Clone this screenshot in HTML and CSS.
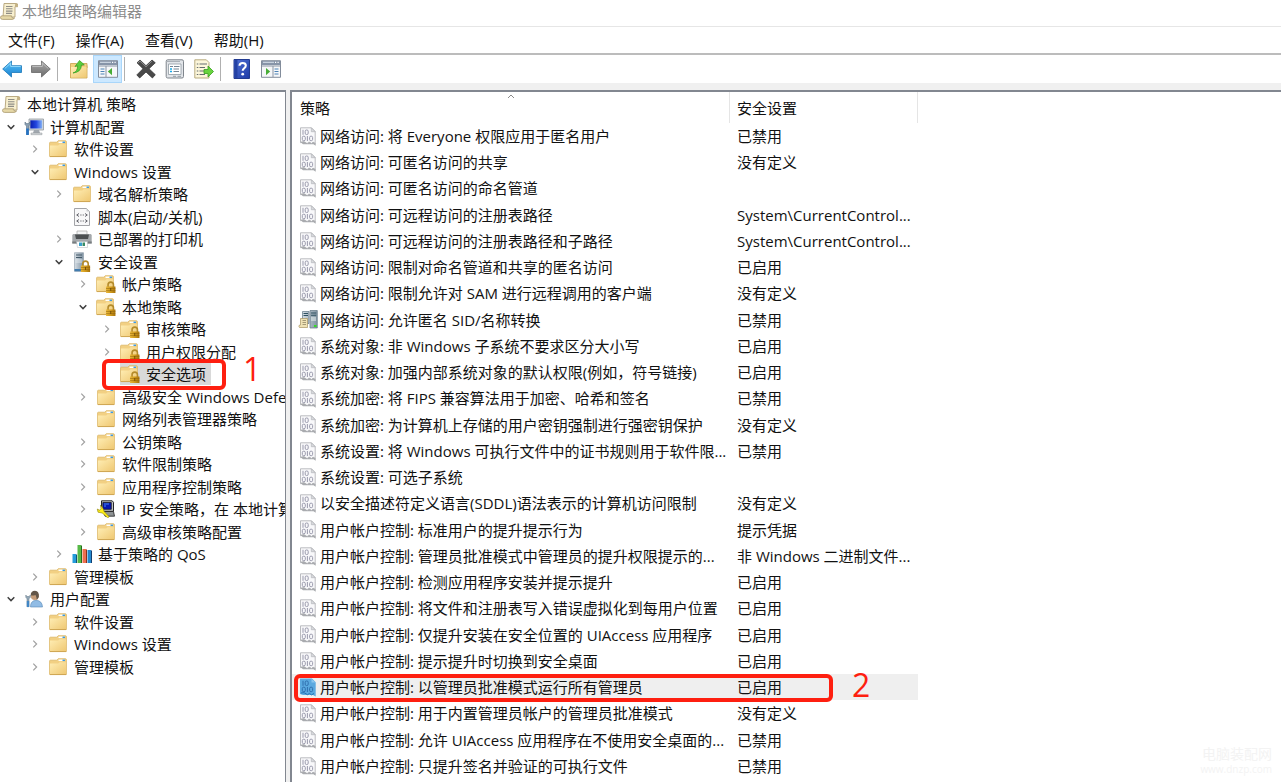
FILE: index.html
```html
<!DOCTYPE html>
<html lang="zh-CN">
<head>
<meta charset="utf-8">
<title>本地组策略编辑器</title>
<link rel="stylesheet" href="styles.css">
</head>
<body>
<svg class="sprite" aria-hidden="true">
  <defs>
    <linearGradient id="gFolder" x1="0" y1="0" x2="1" y2="1"><stop offset="0" stop-color="#ffeeb5"/><stop offset="1" stop-color="#efc873"/></linearGradient>
    <linearGradient id="gLock" x1="0" y1="0" x2="1" y2="0"><stop offset="0" stop-color="#e9b73a"/><stop offset=".5" stop-color="#d09a1c"/><stop offset="1" stop-color="#a8730c"/></linearGradient>
    <linearGradient id="gBlue" x1="0" y1="0" x2="0" y2="1"><stop offset="0" stop-color="#5cc4f8"/><stop offset="1" stop-color="#1780d0"/></linearGradient>
    <linearGradient id="gGray" x1="0" y1="0" x2="0" y2="1"><stop offset="0" stop-color="#a8a8a8"/><stop offset="1" stop-color="#6d6d6d"/></linearGradient>
    <linearGradient id="gScreen" x1="0" y1="0" x2="1" y2="0"><stop offset="0" stop-color="#0a1fae"/><stop offset=".5" stop-color="#2346e0"/><stop offset="1" stop-color="#86b4f6"/></linearGradient>
    <linearGradient id="gServer" x1="0" y1="0" x2="1" y2="0"><stop offset="0" stop-color="#d5dde3"/><stop offset="1" stop-color="#7f92a2"/></linearGradient>
    <linearGradient id="gHelp" x1="0" y1="0" x2="1" y2="1"><stop offset="0" stop-color="#5272d6"/><stop offset="1" stop-color="#1c3aa6"/></linearGradient>
    <symbol id="scroll" viewBox="0 0 18 18"><path d="M4 1.5h12.5q1.2 0 1.2 1.6v1.6H15V15H3z" fill="#f7efcf" stroke="#b3a278" stroke-width=".9"/><path d="M15 4.7V2.8q0-1.3 1.3-1.3t1.4 1.3v1.9z" fill="#c5b283"/><path d="M2 13.8h9.500q-.5 1 .5 1.800t2.500.2q-.7 1.600-2 1.600H2.500q-2 0-2-1.800t1.500-1.800z" fill="#e6d8a7" stroke="#a9986d" stroke-width=".8"/><path d="M6 4.500h6.500M6 6.800h6.500M6 9.100h6.500M6 11.400h6" stroke="#8f8d86" stroke-width="1.100"/></symbol>
    <symbol id="folder" viewBox="0 0 18 18"><path d="M.6 3q0-.8.8-.8h6.400l1.400-1.500h7.200q1 0 1 1V16q0 .6-.6.6H1.200q-.6 0-.6-.6z" fill="#f2d083" stroke="#dcb665" stroke-width=".8"/><path d="M1 5.500h8.200l1.500-1.300h6.300v12H1z" fill="url(#gFolder)"/><path d="M9.500 2.300h6.500" stroke="#fff" stroke-width="1.500"/><path d="M13.500 2.300h2.500" stroke="#3f9ae0" stroke-width="1.500"/><path d="M.8 16.500h16.500" stroke="#cda450" stroke-width=".9"/></symbol>
    <symbol id="lock" viewBox="0 0 10 12"><path d="M2.300 6V3.800q0-2.700 2.700-2.700t2.700 2.700V6" fill="none" stroke="#b48b2b" stroke-width="1.600"/><path d="M.3 5.500h9.400V12H.3z" fill="url(#gLock)"/><path d="M.3 7.500h9.400M.3 9.600h9.400" stroke="#8c6009" stroke-width=".5"/><path d="M4.500 7h1v3h-1z" fill="#765008"/></symbol>
    <symbol id="lockfolder" viewBox="0 0 20 18"><use href="#folder" width="18" height="18"/><use href="#lock" x="9.500" y="6" width="10.500" height="12"/></symbol>
    <symbol id="computer" viewBox="0 0 20 18"><path d="M5 1h14.500v11H5z" fill="#d5d9dd" stroke="#92999f" stroke-width=".8"/><path d="M6.300 2.300h11.900v8.200H6.300z" fill="url(#gScreen)"/><path d="M10 12h5l1 3H9z" fill="#a1a8af"/><path d="M7 15h11v1.700H7z" fill="#d3d7da" stroke="#90969b" stroke-width=".5"/><path d="M1 4v2.500L2.500 8v8.500h2V8L6 6.500V4L4.600 5.600H2.400z" fill="#8ba0b2" stroke="#5b7185" stroke-width=".6"/><path d="M2.200 10.500h2.600V17H2.200z" fill="#2674c4"/></symbol>
    <symbol id="script" viewBox="0 0 18 18"><path d="M1.500.5h12l3 3v14h-15z" fill="#f8f8f9" stroke="#a3a4a8" stroke-width="1"/><path d="M13.500.5v3h3z" fill="#caccd0"/><path d="M6 5.500 3.700 7 6 8.500M12 5.500 14.300 7 12 8.500M7.300 7h1.200M9.700 7h1.200M6 11.500 3.700 13 6 14.500M12 11.500l2.300 1.500-2.300 1.500M7.300 13h1.200M9.700 13h1.200" fill="none" stroke="#55565e" stroke-width=".9"/></symbol>
    <symbol id="printer" viewBox="0 0 20 18"><path d="M5 1h10v6H5z" fill="#f3f4f5" stroke="#a8a8a8" stroke-width=".7"/><path d="M1.500 4h17q1.200 0 1.200 1.500v8H.3v-8Q.3 4 1.500 4z" fill="#a4a8ab"/><path d="M3 4.500h14l-1 4.500H4z" fill="#4b4f51"/><path d="M.3 11.500h19.400v2H.3z" fill="#777c7f"/><path d="M4.500 11.500h11V17.500H5.500z" fill="#fff" stroke="#adb4b9" stroke-width=".5"/><path d="M7 12.500h3v3.500H7z" fill="#389fcb"/><path d="M10.500 12.500h2.500v3.500h-2.500z" fill="#3a8b65"/></symbol>
    <symbol id="server" viewBox="0 0 18 20"><path d="M1.500.7h9v18.600h-9z" fill="url(#gServer)" stroke="#8c9ba7" stroke-width=".6"/><path d="M3 3h6M3 5.500h6" stroke="#435968" stroke-width="1.200"/><path d="M2.500 8h7M2.500 10h7" stroke="#eef3f5" stroke-width=".8"/><path d="M1.500 17h9v2.300h-9z" fill="#427cae"/><use href="#lock" x="7.500" y="8" width="10" height="12"/></symbol>
    <symbol id="ipsec" viewBox="0 0 18 18"><path d="M4.500.8h10.700l1.300 1.500v9H4.500z" fill="#c0c4c4" stroke="#252525"/><path d="M5.800 2.500h8.500v6.800H5.800z" fill="#0717b2" stroke="#111" stroke-width=".7"/><path d="M7 4h5M7 6h2" stroke="#58a6ff" stroke-width=".8"/><path d="M6.500 11.500h10l1 4.700H8z" fill="#8d9294" stroke="#222" stroke-width=".8"/><path d="M3.500 5.200 5.800 8l1.400 3.600 5 5.200-1.500 1L5.200 13 1 12.200.3 9l2.300 1.300L4 8.500z" fill="#ffef18" stroke="#887c08" stroke-width=".6"/></symbol>
    <symbol id="qos" viewBox="0 0 20 18"><path d="M.5 9h3.500v9H.5z" fill="#249cda"/><path d="M4 9l1 1v8H4z" fill="#125276"/><path d="M5.500 0H9v18H5.500z" fill="#57b947"/><path d="M9 0l1 1v17H9z" fill="#246d1c"/><path d="M10.500 4H14v14h-3.500z" fill="#ee7050"/><path d="M14 4l1 1v13h-1z" fill="#8e2f19"/><path d="M15.500 5H19v13h-3.500z" fill="#2589ce"/><path d="M19 5l1 1v12h-1z" fill="#123f70"/></symbol>
    <symbol id="user" viewBox="0 0 18 18"><path d="M5.500 17q-.2-6.200 5.500-6.700 6.200.3 6.500 6.700z" fill="#91bce5" stroke="#5788b6" stroke-width=".6"/><circle cx="9.800" cy="6" r="4" fill="#c49c79"/><path d="M5.700 5.300q0-4.600 4.300-4.600 4.500.3 3.800 6.400l-2 3q-.2-3.700-1.300-5.200-2.500.9-4.800.4z" fill="#625649"/><path d="M.8 5v2.300L2 8.800v7.900h2V8.800l1.400-1.500V5L4 6.500H2z" fill="#92a6b6" stroke="#657888" stroke-width=".5"/><path d="M1.800 11h2.400v6H1.800z" fill="#4186c5"/></symbol>
    <symbol id="policy" viewBox="0 0 18 19"><path d="M1.500.8h11l3.700 3.700v12l-2-1.200-1.700 1.200L10 15l-2 1.700-3-2-3.500 1z" fill="#f8f8fa" stroke="#bbbcc0"/><path d="M12.300.8v3.900h3.900z" fill="#d8dade" stroke="#adafb4" stroke-width=".6"/><path d="M1 14.800l4-.3 3.500 2 2-1.500 2 1.500L14 15l2.700 1.300v2.500l-2.200-1.500H4z" fill="#a9abaf"/><g fill="none" stroke="#9a9aad"><path d="M4 2.800v5M8.400 9v5"/><rect x="6.200" y="3" width="3" height="4.500" rx="1.300"/><rect x="3.300" y="9.200" width="3" height="4.500" rx="1.300"/><rect x="10.600" y="9.200" width="3" height="4.500" rx="1.300"/></g></symbol>
    <symbol id="policy-selected" viewBox="0 0 18 19"><path d="M1 .5h12L16.700 4.200v14.300L14 17H4l-3-1z" fill="#5aa9e0"/><path d="M12.500.8v3.700h4z" fill="#8ac7f0"/><g fill="none" stroke="#2f6fae"><path d="M4 2.800v5M8.400 9v5"/><rect x="6.200" y="3" width="3" height="4.500" rx="1.300"/><rect x="3.300" y="9.200" width="3" height="4.500" rx="1.300"/><rect x="10.600" y="9.200" width="3" height="4.500" rx="1.300"/></g><path d="M2 15l3-.3 3.500 2 2-1.300 2 1.500L15 15.500" fill="none" stroke="#2171b2"/></symbol>
    <symbol id="servers" viewBox="0 0 20 19"><path d="M4.500 1.500H11v12H4.500zM12 .5h7.300V18H12z" fill="url(#gServer)" stroke="#617785" stroke-width=".7"/><path d="M5.500 3.500h4.500M5.500 5.500h4.500M13 3h5.200M13 5.200h5.200" stroke="#2f5160" stroke-width="1.100"/><path d="M13 8h5M13 10h5" stroke="#e9f2f1"/><path d="M16 15h2.500v2H16z" fill="#35dd24"/><path d="M2.500 8.500h7v9h-8q-1.300-1.300 0-2.500h1z" fill="#efe2b5" stroke="#a89462" stroke-width=".7"/><path d="M4.500 10.500h3.500M4.500 12.500h3.500M4.500 14.500h3.500" stroke="#928868" stroke-width=".8"/></symbol>
    <symbol id="back" viewBox="0 0 20 20"><path d="M.7 10 9.500 2v4.700h10v6.800h-10V18z" fill="url(#gBlue)" stroke="#1976b7" stroke-width=".8"/><path d="M2.800 9.500 8.700 4v3.500h10" fill="none" stroke="#a2e2ff" stroke-width=".8"/></symbol>
    <symbol id="forward" viewBox="0 0 20 20"><path d="M19.300 10 10.500 2v4.700H.5v6.800h10V18z" fill="url(#gGray)" stroke="#676767" stroke-width=".8"/><path d="M1.300 7.500h10V4l6 5.500" fill="none" stroke="#c7c7c7" stroke-width=".8"/></symbol>
    <symbol id="up" viewBox="0 0 20 20"><path d="M1.500 4.500h6l1.500 2h9V19h-16.500z" fill="#f2d17d" stroke="#c8a14a" stroke-width=".8"/><path d="M12 4.500h6V9" fill="#eed08a" stroke="#c8a14a" stroke-width=".8"/><path d="M2 8h15.500v10.500H2z" fill="url(#gFolder)"/><path d="M4 14q4.500-1.200 4.700-7.200L6 7.500 10.500 1.500l4.800 4.300-2.900.2Q12.500 13 4 14z" fill="#59ce3e" stroke="#329b20" stroke-width=".7"/></symbol>
    <symbol id="pane-left" viewBox="0 0 20 18"><path d="M.5.7h19v16.600H.5z" fill="#f6f7f9" stroke="#828c9b"/><path d="M1 1h18v4H1z" fill="#8794a8"/><path d="M2 2.300h11" stroke="#d9e1eb"/><path d="M14 2.300h1.200M16.500 2.300h1.200" stroke="#fff" stroke-width="1.200"/><path d="M1 6h18M8 6v11" stroke="#8b95a5"/><path d="M2.500 9h4M2.500 11.500h4M2.500 14h4" stroke="#4d83b7" stroke-width="1.200"/><path d="M14 8v7.200L9.800 11.600z" fill="#47ad36"/></symbol>
    <symbol id="pane-right" viewBox="0 0 20 18"><path d="M.5.7h19v16.600H.5z" fill="#f6f7f9" stroke="#828c9b"/><path d="M1 1h18v4H1z" fill="#8794a8"/><path d="M2 2.300h11" stroke="#d9e1eb"/><path d="M14 2.300h1.200M16.500 2.300h1.200" stroke="#fff" stroke-width="1.200"/><path d="M1 6h18M12 6v11" stroke="#8b95a5"/><path d="M13.500 9h4M13.500 11.500h4M13.500 14h4" stroke="#4d83b7" stroke-width="1.200"/><path d="M5 8v7.200l4.200-3.600z" fill="#47ad36"/></symbol>
    <symbol id="delete" viewBox="0 0 20 20"><path d="M1 3.800 4 1l6 5.700L16 1l3.300 2.800L13 9.700l6.300 6L16.400 19 10 13l-6.300 6L.8 15.900 7 9.700z" fill="#4a4a4a" stroke="#2c2c2c" stroke-width=".7"/><path d="M2 4l2-1.900 6 5.700 6-5.700" fill="none" stroke="#898989"/></symbol>
    <symbol id="props" viewBox="0 0 20 20"><rect x="1.200" y=".8" width="17.300" height="18.200" rx="1.500" fill="#e2e5e9" stroke="#7f858c"/><path d="M2 2.500h13" stroke="#aab0b7"/><path d="M3.500 5h12.500v10.500H3.500z" fill="#fff" stroke="#919aa2" stroke-width=".8"/><path d="M5 7.500h3M9 7.500h5.500M8.500 10h5.500M8.500 12.500h5.500" stroke="#758493"/><path d="M5 10h2M5 12.500h2" stroke="#19a9e8" stroke-width="1.300"/><path d="M8 17.300h3M12.500 17.300h3.500" stroke="#939ba2"/></symbol>
    <symbol id="export" viewBox="0 0 20 20"><path d="M.8.8h11.500L15 3.500V19H.8z" fill="#fcf6da" stroke="#b8ab80"/><path d="M2.800 5h1.500M5.500 5H13M2.800 8.500h1.500M5.500 8.500H11M2.800 12h1.500M5.500 12H10M2.800 15.500h1.500M5.500 15.500H11" stroke="#656c70" stroke-width="1.100"/><path d="M10 10.500h4V7l5.500 5.500L14 18v-3.500h-4z" fill="#68d33e" stroke="#37a020" stroke-width=".8"/></symbol>
    <symbol id="help" viewBox="0 0 20 20"><path d="M2 .5h15.500v19H2z" fill="url(#gHelp)" stroke="#223b91"/><path d="M2.500 1h3v18h-3z" fill="#2441a4"/><path d="M7.500 6.800Q7.600 4 10.700 4t3.100 2.600q0 1.600-1.700 2.700-1.400.9-1.400 2.500" fill="none" stroke="#fff" stroke-width="2.100"/><circle cx="10.700" cy="15.200" r="1.400" fill="#fff"/></symbol>
    <symbol id="open" viewBox="0 0 12 12"><path d="M2.700 4.300 6 7.600l3.300-3.300" fill="none" stroke="#404040" stroke-width="1.500"/></symbol>
    <symbol id="closed" viewBox="0 0 12 12"><path d="M4.300 2.700 7.600 6 4.300 9.300" fill="none" stroke="#a0a0a0" stroke-width="1.200"/></symbol>
  </defs>
</svg>

<div class="window">
  <header class="titlebar"><svg class="icon"><use href="#scroll"/></svg><h1 class="titlebar__text">本地组策略编辑器</h1></header>
  <nav class="menubar">
    <button class="menubar__item">文件(F)</button><button class="menubar__item">操作(A)</button><button class="menubar__item">查看(V)</button><button class="menubar__item">帮助(H)</button>
  </nav>
  <div class="toolbar" role="toolbar">
    <button class="tool" aria-label="后退"><svg class="tool__icon"><use href="#back"/></svg></button>
    <button class="tool" aria-label="前进"><svg class="tool__icon"><use href="#forward"/></svg></button>
    <span class="toolbar__sep"></span>
    <button class="tool" aria-label="上一级"><svg class="tool__icon"><use href="#up"/></svg></button>
    <button class="tool tool--active" aria-label="显示/隐藏控制台树"><svg class="tool__icon"><use href="#pane-left"/></svg></button>
    <span class="toolbar__sep"></span>
    <button class="tool" aria-label="删除"><svg class="tool__icon"><use href="#delete"/></svg></button>
    <button class="tool" aria-label="属性"><svg class="tool__icon"><use href="#props"/></svg></button>
    <button class="tool" aria-label="导出列表"><svg class="tool__icon"><use href="#export"/></svg></button>
    <span class="toolbar__sep"></span>
    <button class="tool" aria-label="帮助"><svg class="tool__icon"><use href="#help"/></svg></button>
    <button class="tool" aria-label="显示/隐藏操作窗格"><svg class="tool__icon"><use href="#pane-right"/></svg></button>
  </div>
  <main class="content">
    <ul class="tree">
      <li class="node node--root"><svg class="icon"><use href="#scroll"/></svg><span>本地计算机 策略</span></li>
      <li class="node node--l1"><button class="twisty" aria-label="折叠"><svg><use href="#open"/></svg></button><svg class="icon"><use href="#computer"/></svg><span>计算机配置</span></li>
      <li class="node node--l2"><button class="twisty" aria-label="展开"><svg><use href="#closed"/></svg></button><svg class="icon"><use href="#folder"/></svg><span>软件设置</span></li>
      <li class="node node--l2"><button class="twisty" aria-label="折叠"><svg><use href="#open"/></svg></button><svg class="icon"><use href="#folder"/></svg><span>Windows 设置</span></li>
      <li class="node node--l3"><button class="twisty" aria-label="展开"><svg><use href="#closed"/></svg></button><svg class="icon"><use href="#folder"/></svg><span>域名解析策略</span></li>
      <li class="node node--l3"><span class="twisty"></span><svg class="icon"><use href="#script"/></svg><span>脚本(启动/关机)</span></li>
      <li class="node node--l3"><button class="twisty" aria-label="展开"><svg><use href="#closed"/></svg></button><svg class="icon"><use href="#printer"/></svg><span>已部署的打印机</span></li>
      <li class="node node--l3"><button class="twisty" aria-label="折叠"><svg><use href="#open"/></svg></button><svg class="icon icon--tall"><use href="#server"/></svg><span>安全设置</span></li>
      <li class="node node--l4"><button class="twisty" aria-label="展开"><svg><use href="#closed"/></svg></button><svg class="icon"><use href="#lockfolder"/></svg><span>帐户策略</span></li>
      <li class="node node--l4"><button class="twisty" aria-label="折叠"><svg><use href="#open"/></svg></button><svg class="icon"><use href="#lockfolder"/></svg><span>本地策略</span></li>
      <li class="node node--l5"><button class="twisty" aria-label="展开"><svg><use href="#closed"/></svg></button><svg class="icon"><use href="#lockfolder"/></svg><span>审核策略</span></li>
      <li class="node node--l5"><button class="twisty" aria-label="展开"><svg><use href="#closed"/></svg></button><svg class="icon"><use href="#lockfolder"/></svg><span>用户权限分配</span></li>
      <li class="node node--l5 node--selected"><span class="twisty"></span><span class="node__hit"><svg class="icon"><use href="#lockfolder"/></svg><span>安全选项</span></span><span class="mark mark--tree"></span><span class="step step--tree">1</span></li>
      <li class="node node--l4"><button class="twisty" aria-label="展开"><svg><use href="#closed"/></svg></button><svg class="icon"><use href="#folder"/></svg><span>高级安全 Windows Defe</span></li>
      <li class="node node--l4"><span class="twisty"></span><svg class="icon"><use href="#folder"/></svg><span>网络列表管理器策略</span></li>
      <li class="node node--l4"><button class="twisty" aria-label="展开"><svg><use href="#closed"/></svg></button><svg class="icon"><use href="#folder"/></svg><span>公钥策略</span></li>
      <li class="node node--l4"><button class="twisty" aria-label="展开"><svg><use href="#closed"/></svg></button><svg class="icon"><use href="#folder"/></svg><span>软件限制策略</span></li>
      <li class="node node--l4"><button class="twisty" aria-label="展开"><svg><use href="#closed"/></svg></button><svg class="icon"><use href="#folder"/></svg><span>应用程序控制策略</span></li>
      <li class="node node--l4"><button class="twisty" aria-label="展开"><svg><use href="#closed"/></svg></button><svg class="icon"><use href="#ipsec"/></svg><span>IP 安全策略，在 本地计算</span></li>
      <li class="node node--l4"><button class="twisty" aria-label="展开"><svg><use href="#closed"/></svg></button><svg class="icon"><use href="#folder"/></svg><span>高级审核策略配置</span></li>
      <li class="node node--l3"><button class="twisty" aria-label="展开"><svg><use href="#closed"/></svg></button><svg class="icon"><use href="#qos"/></svg><span>基于策略的 QoS</span></li>
      <li class="node node--l2"><button class="twisty" aria-label="展开"><svg><use href="#closed"/></svg></button><svg class="icon"><use href="#folder"/></svg><span>管理模板</span></li>
      <li class="node node--l1"><button class="twisty" aria-label="折叠"><svg><use href="#open"/></svg></button><svg class="icon"><use href="#user"/></svg><span>用户配置</span></li>
      <li class="node node--l2"><button class="twisty" aria-label="展开"><svg><use href="#closed"/></svg></button><svg class="icon"><use href="#folder"/></svg><span>软件设置</span></li>
      <li class="node node--l2"><button class="twisty" aria-label="展开"><svg><use href="#closed"/></svg></button><svg class="icon"><use href="#folder"/></svg><span>Windows 设置</span></li>
      <li class="node node--l2"><button class="twisty" aria-label="展开"><svg><use href="#closed"/></svg></button><svg class="icon"><use href="#folder"/></svg><span>管理模板</span></li>
    </ul>
    <section class="list">
      <table class="policies">
        <colgroup><col class="policies__name"><col class="policies__value"></colgroup>
        <thead><tr><th>策略<svg class="sort" viewBox="0 0 8 5"><path d="M1 4l3-3 3 3" fill="none" stroke="#8a8a8a"/></svg></th><th>安全设置</th></tr></thead>
        <tbody>
          <tr><td><div class="cell"><svg class="icon"><use href="#policy"/></svg>网络访问: 将 Everyone 权限应用于匿名用户</div></td><td>已禁用</td></tr>
          <tr><td><div class="cell"><svg class="icon"><use href="#policy"/></svg>网络访问: 可匿名访问的共享</div></td><td>没有定义</td></tr>
          <tr><td><div class="cell"><svg class="icon"><use href="#policy"/></svg>网络访问: 可匿名访问的命名管道</div></td><td></td></tr>
          <tr><td><div class="cell"><svg class="icon"><use href="#policy"/></svg>网络访问: 可远程访问的注册表路径</div></td><td>System\CurrentControl...</td></tr>
          <tr><td><div class="cell"><svg class="icon"><use href="#policy"/></svg>网络访问: 可远程访问的注册表路径和子路径</div></td><td>System\CurrentControl...</td></tr>
          <tr><td><div class="cell"><svg class="icon"><use href="#policy"/></svg>网络访问: 限制对命名管道和共享的匿名访问</div></td><td>已启用</td></tr>
          <tr><td><div class="cell"><svg class="icon"><use href="#policy"/></svg>网络访问: 限制允许对 SAM 进行远程调用的客户端</div></td><td>没有定义</td></tr>
          <tr><td><div class="cell"><svg class="icon"><use href="#servers"/></svg>网络访问: 允许匿名 SID/名称转换</div></td><td>已禁用</td></tr>
          <tr><td><div class="cell"><svg class="icon"><use href="#policy"/></svg>系统对象: 非 Windows 子系统不要求区分大小写</div></td><td>已启用</td></tr>
          <tr><td><div class="cell"><svg class="icon"><use href="#policy"/></svg>系统对象: 加强内部系统对象的默认权限(例如，符号链接)</div></td><td>已启用</td></tr>
          <tr><td><div class="cell"><svg class="icon"><use href="#policy"/></svg>系统加密: 将 FIPS 兼容算法用于加密、哈希和签名</div></td><td>已禁用</td></tr>
          <tr><td><div class="cell"><svg class="icon"><use href="#policy"/></svg>系统加密: 为计算机上存储的用户密钥强制进行强密钥保护</div></td><td>没有定义</td></tr>
          <tr><td><div class="cell"><svg class="icon"><use href="#policy"/></svg>系统设置: 将 Windows 可执行文件中的证书规则用于软件限...</div></td><td>已禁用</td></tr>
          <tr><td><div class="cell"><svg class="icon"><use href="#policy"/></svg>系统设置: 可选子系统</div></td><td></td></tr>
          <tr><td><div class="cell"><svg class="icon"><use href="#policy"/></svg>以安全描述符定义语言(SDDL)语法表示的计算机访问限制</div></td><td>没有定义</td></tr>
          <tr><td><div class="cell"><svg class="icon"><use href="#policy"/></svg>用户帐户控制: 标准用户的提升提示行为</div></td><td>提示凭据</td></tr>
          <tr><td><div class="cell"><svg class="icon"><use href="#policy"/></svg>用户帐户控制: 管理员批准模式中管理员的提升权限提示的...</div></td><td>非 Windows 二进制文件...</td></tr>
          <tr><td><div class="cell"><svg class="icon"><use href="#policy"/></svg>用户帐户控制: 检测应用程序安装并提示提升</div></td><td>已启用</td></tr>
          <tr><td><div class="cell"><svg class="icon"><use href="#policy"/></svg>用户帐户控制: 将文件和注册表写入错误虚拟化到每用户位置</div></td><td>已启用</td></tr>
          <tr><td><div class="cell"><svg class="icon"><use href="#policy"/></svg>用户帐户控制: 仅提升安装在安全位置的 UIAccess 应用程序</div></td><td>已启用</td></tr>
          <tr><td><div class="cell"><svg class="icon"><use href="#policy"/></svg>用户帐户控制: 提示提升时切换到安全桌面</div></td><td>已启用</td></tr>
          <tr class="is-selected"><td><div class="cell"><svg class="icon"><use href="#policy-selected"/></svg>用户帐户控制: 以管理员批准模式运行所有管理员<span class="mark mark--list"></span><span class="step step--list">2</span></div></td><td>已启用</td></tr>
          <tr><td><div class="cell"><svg class="icon"><use href="#policy"/></svg>用户帐户控制: 用于内置管理员帐户的管理员批准模式</div></td><td>没有定义</td></tr>
          <tr><td><div class="cell"><svg class="icon"><use href="#policy"/></svg>用户帐户控制: 允许 UIAccess 应用程序在不使用安全桌面的...</div></td><td>已禁用</td></tr>
          <tr><td><div class="cell"><svg class="icon"><use href="#policy"/></svg>用户帐户控制: 只提升签名并验证的可执行文件</div></td><td>已禁用</td></tr>
        </tbody>
      </table>
    </section>
  </main>
  <div class="watermark"><div class="watermark__name">电脑装配网</div><div class="watermark__site">www.dnzp.com</div></div>
</div>
</body>
</html>
```

FILE: styles.css
```css
* { box-sizing: border-box; }

body {
  margin: 0;
  background: #fff;
  color: #111;
  font: 15px/22px "Open Sans", "Noto Sans CJK SC", sans-serif;
}

button {
  margin: 0;
  padding: 0;
  border: 0;
  background: none;
  color: inherit;
  font: inherit;
}

.sprite { position: absolute; width: 0; height: 0; }

.icon { flex: none; width: 20px; height: 18px; }
.icon--tall { height: 20px; }

.window {
  position: relative;
  display: flex;
  flex-direction: column;
  height: 100vh;
  overflow: hidden;
}

.titlebar {
  display: flex;
  flex: none;
  align-items: center;
  gap: 4px;
  height: 27px;
  padding-bottom: 4px;
  border-bottom: 1px solid #e6e6e6;
}
.titlebar .icon { width: 18px; }
.titlebar__text { margin: 0; color: #8c8c8c; font-size: 15px; font-weight: 400; }

.menubar {
  display: flex;
  flex: none;
  align-items: center;
  gap: 21px;
  height: 28px;
  padding: 0 8px 1px;
  border-bottom: 2px solid #bcbcbc;
}

.toolbar {
  display: flex;
  flex: none;
  align-items: center;
  height: 28px;
  margin-left: -3px;
}
.toolbar__sep { width: 1px; height: 24px; margin: 0 6px 0 2px; background: #b0b0b0; }

.tool { display: grid; place-items: center; width: 29px; height: 28px; }
.tool--active { border: 1px solid #a9d6fa; background: #cce8ff; }
.tool__icon { width: 20px; height: 20px; }

.content {
  display: grid;
  flex: 1;
  grid-template-columns: 286px 1fr;
  gap: 4px;
  min-height: 0;
  padding-top: 7px;
  background: #f0f0f0;
}

.tree {
  min-width: 0;
  margin: 0;
  padding: 1px 0 0;
  overflow: hidden;
  border-top: 2px solid #828790;
  border-right: 1px solid #828790;
  background: #fff;
  list-style: none;
}

.node {
  position: relative;
  display: flex;
  align-items: center;
  height: 22px;
  padding-left: 3px;
  white-space: nowrap;
}
.node:nth-child(even) { height: 23px; }
.node .icon { margin-right: 6px; }
.node--root { padding-left: 1px; }
.node--l2 { padding-left: 27px; }
.node--l3 { padding-left: 51px; }
.node--l4 { padding-left: 75px; }
.node--l5 { padding-left: 99px; }
.node__hit {
  display: flex;
  align-items: center;
  height: 22px;
  padding-right: 5px;
  background: #d9d9d9;
}

.twisty { display: grid; flex: none; place-items: center; width: 16px; height: 16px; margin-right: 5px; }
.twisty svg { width: 12px; height: 12px; }

.list {
  min-width: 0;
  overflow: hidden;
  border-top: 2px solid #828790;
  border-left: 2px solid #828790;
  background: #fff;
}

.policies { width: 626px; border-spacing: 0; table-layout: fixed; }
.policies__name { width: 438px; }
.policies__value { width: 188px; }
.policies th {
  position: relative;
  height: 31px;
  padding: 0 0 0 8px;
  border-right: 1px solid #e5e5e5;
  font-weight: 400;
  text-align: left;
}
.policies td { height: 26px; padding: 0 0 0 7px; white-space: nowrap; }
.policies th:last-child { padding-left: 7px; }
.policies tbody tr:nth-child(4n) td { height: 27px; }
.policies td:first-child { padding-left: 6px; }
.is-selected td { background: #efefef; }

.cell { position: relative; display: flex; align-items: center; }
.cell .icon { height: 19px; margin-right: 2px; }

.sort { position: absolute; top: 2px; left: 50%; width: 8px; height: 5px; margin-left: -4px; }

.mark { position: absolute; z-index: 1; border: 4px solid #fe1f10; border-radius: 6px; }
.mark--tree { top: -4px; left: 102px; width: 124px; height: 31px; }
.mark--list { top: -2px; left: -4px; width: 539px; height: 28px; }

.step { position: absolute; z-index: 1; color: #fe1f10; font-size: 32px; line-height: 32px; }
.step--tree { top: -10px; left: 243px; }
.step--list { top: -7px; left: 554px; }

.watermark { position: absolute; right: 9px; bottom: 6px; color: #f3f3f3; text-align: right; }
.watermark__name { font-size: 14px; line-height: 16px; }
.watermark__site { font-size: 10px; line-height: 14px; }
```
